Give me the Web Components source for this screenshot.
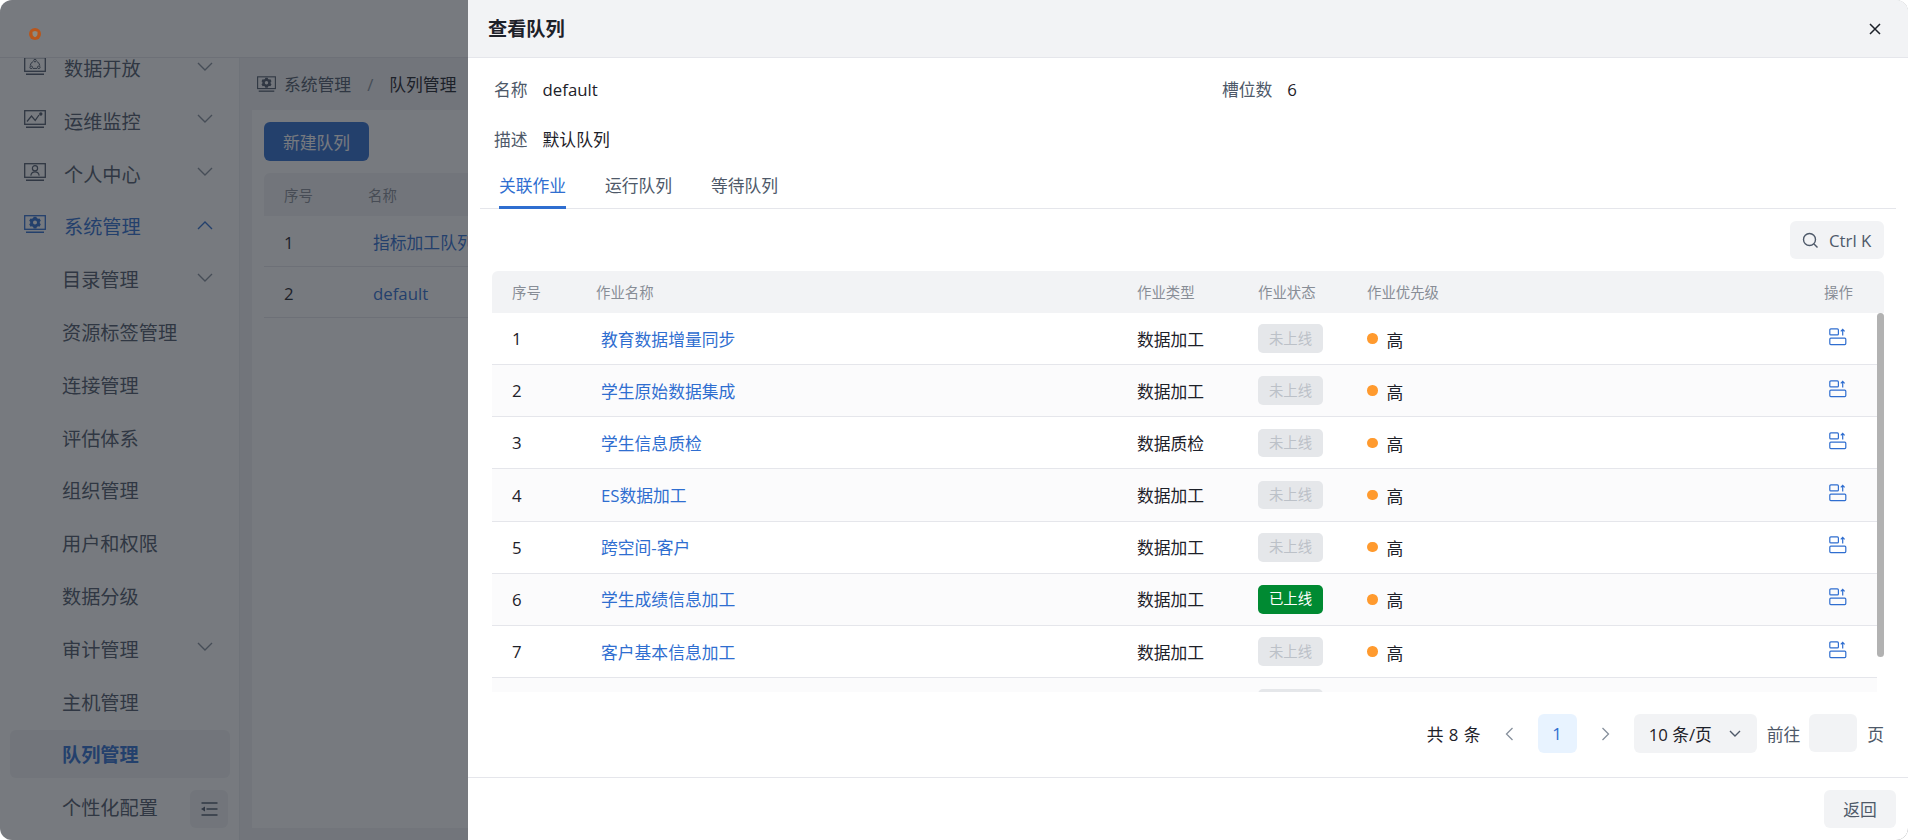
<!DOCTYPE html>
<html lang="zh-CN">
<head>
<meta charset="utf-8">
<title>队列管理</title>
<style>
  html, body { margin: 0; padding: 0; background: #fff; width: 1908px; height: 840px; overflow: hidden; }
  body { font-family: "Open Sans", "Noto Sans CJK SC", sans-serif; color: #1d2129; --blue: #2f6ed0; }
</style>
</head>
<body>
<x-app>
  <x-topbar slot="top"></x-topbar>
  <x-sidebar slot="side">
    <x-nav-item icon="open" chevron="down">数据开放</x-nav-item>
    <x-nav-item icon="monitor" chevron="down">运维监控</x-nav-item>
    <x-nav-item icon="person" chevron="down">个人中心</x-nav-item>
    <x-nav-item icon="gear" chevron="up" open>系统管理</x-nav-item>
    <x-nav-item sub chevron="down">目录管理</x-nav-item>
    <x-nav-item sub>资源标签管理</x-nav-item>
    <x-nav-item sub>连接管理</x-nav-item>
    <x-nav-item sub>评估体系</x-nav-item>
    <x-nav-item sub>组织管理</x-nav-item>
    <x-nav-item sub>用户和权限</x-nav-item>
    <x-nav-item sub>数据分级</x-nav-item>
    <x-nav-item sub chevron="down">审计管理</x-nav-item>
    <x-nav-item sub>主机管理</x-nav-item>
    <x-nav-item sub active>队列管理</x-nav-item>
    <x-nav-item sub>个性化配置</x-nav-item>
  </x-sidebar>
  <x-queue-page slot="main"></x-queue-page>
  <x-drawer slot="drawer" heading="查看队列">
    <x-info-grid></x-info-grid>
    <x-tabs></x-tabs>
    <x-job-table></x-job-table>
    <x-pagination></x-pagination>
    <x-button slot="footer">返回</x-button>
  </x-drawer>
</x-app>

<script>
const ICONS = {
  open: '<rect x="0.7" y="0.7" width="20.6" height="13.6" fill="none" stroke="currentColor" stroke-width="1.3"/><path d="M2 17.3h18" stroke="currentColor" stroke-width="1.5"/><circle cx="11" cy="3.6" r="1.3" fill="none" stroke="currentColor"/><circle cx="7.2" cy="10.3" r="1.3" fill="none" stroke="currentColor"/><circle cx="14.8" cy="10.3" r="1.3" fill="none" stroke="currentColor"/><path d="M9 4.6A5 5 0 0 0 6.2 8.6M13 4.6a5 5 0 0 1 2.8 4M9 11.4h4" fill="none" stroke="currentColor"/>',
  monitor: '<rect x="0.7" y="0.7" width="20.6" height="13.6" fill="none" stroke="currentColor" stroke-width="1.3"/><path d="M2 17.3h18" stroke="currentColor" stroke-width="1.5"/><path d="M3 11.5 7.5 6l3.7 4.4L15 5" fill="none" stroke="currentColor" stroke-width="1.2"/><circle cx="16.8" cy="4" r="1.7" fill="currentColor"/>',
  person: '<rect x="0.7" y="0.7" width="20.6" height="13.6" fill="none" stroke="currentColor" stroke-width="1.3"/><path d="M2 17.3h18" stroke="currentColor" stroke-width="1.5"/><circle cx="11" cy="5.2" r="2.6" fill="none" stroke="currentColor" stroke-width="1.2"/><path d="M6.8 12.6c.4-2.6 2-3.8 4.2-3.8s3.800 1.200 4.200 3.800" fill="none" stroke="currentColor" stroke-width="1.2"/>',
  gear: '<rect x="0.7" y="0.7" width="20.6" height="13.6" fill="none" stroke="currentColor" stroke-width="1.3"/><path d="M2 17.3h18" stroke="currentColor" stroke-width="1.5"/><path fill-rule="evenodd" fill="currentColor" d="M9.600 2.600h2.800l.4 1.400 1.300.7 1.400-.4 1.300 2.400-1 1 0 1.500 1 1-1.300 2.400-1.400-.4-1.300.7-.4 1.400H9.600l-.4-1.400-1.300-.7-1.400.4-1.300-2.400 1-1V7.700l-1-1 1.300-2.400 1.400.4 1.300-.7zM11 6.400a2 2 0 1 0 0 4 2 2 0 0 0 0-4z" transform="translate(0 -0.9)"/>'
};

function define(name, css, html, setup) {
  customElements.define(name, class extends HTMLElement {
    constructor() {
      super();
      this.attachShadow({ mode: 'open' });
    }
    connectedCallback() {
      if (this._done) return;
      this._done = true;
      const h = typeof html === 'function' ? html(this) : html;
      this.shadowRoot.innerHTML = `<style>${css}</style>${h}`;
      if (setup) setup(this);
    }
  });
}

define('x-app', `
  :host { display: block; position: relative; width: 1908px; height: 840px; overflow: hidden; border-radius: 12px; background: #fff; }
  .frame { display: flex; flex-direction: column; height: 100%; }
  .body { flex: 1; min-height: 0; display: flex; }
  .mask { position: absolute; inset: 0; background: rgba(29,33,41,.6); z-index: 1; }
`, `
  <div class="frame">
    <slot name="top"></slot>
    <div class="body"><slot name="side"></slot><slot name="main"></slot></div>
  </div>
  <div class="mask"></div>
  <slot name="drawer"></slot>
`);

define('x-topbar', `
  :host { display: flex; align-items: center; box-sizing: border-box; height: 58px; background: #fff; border-bottom: 1px solid #e5e6eb; padding: 10px 0 0 29px; flex: none; }
  svg { position: relative; z-index: 2; display: block; }
`, `
  <svg width="12" height="12" viewBox="0 0 12 12">
    <circle cx="6" cy="6" r="6" fill="#b8561c"/>
    <path d="M3.500 3.700 6 3l2.500.7v2.300C8.500 7.700 7.300 8.700 6 9.200 4.700 8.700 3.500 7.700 3.500 6z" fill="#8d8a82"/>
  </svg>
`);

define('x-sidebar', `
  :host { display: block; position: relative; flex: none; width: 240px; box-sizing: border-box; height: 782px; overflow: hidden; background: #fff; border-right: 1px solid #eceef1; }
  .list { display: flex; flex-direction: column; margin-top: -16.4px; }
  .collapse { position: absolute; left: 190px; bottom: 12px; width: 38px; height: 38px; border-radius: 6px; background: #f2f3f5; display: flex; align-items: center; justify-content: center; }
`, `
  <div class="list"><slot></slot></div>
  <div class="collapse">
    <svg width="18" height="14" viewBox="0 0 18 14">
      <path d="M1.500 1h16M6.500 7h11M1.500 13h16" stroke="#4e5969" stroke-width="1.300" fill="none"/>
      <path d="M1 7l4-2.500v5z" fill="#4e5969"/>
    </svg>
  </div>
`);

define('x-nav-item', `
  :host { display: block; height: 52.8px; box-sizing: border-box; padding: 2.4px 9px 2.4px 10px; font-size: 19.2px; color: #4e5969; flex: none; }
  .row { height: 48px; display: flex; align-items: center; border-radius: 6px; }
  .ic { width: 22px; height: 18px; margin-left: 14px; margin-right: 18px; margin-top: -4px; flex: none; }
  .ic svg { display: block; }
  .label { flex: 1; line-height: 22px; white-space: nowrap; margin-top: 2px; }
  :host([sub]) .label { margin-left: 52px; }
  :host([open]) { color: var(--blue); }
  :host([active]) .row { background: #f2f3f5; }
  :host([active]) .label { color: var(--blue); font-weight: 700; }
  .chev { width: 16px; height: 10px; margin-right: 17px; flex: none; display: block; margin-top: -3px; }
`, (el) => `
  <div class="row">
    ${el.hasAttribute('icon') ? `<span class="ic"><svg width="22" height="18" viewBox="0 0 22 18">${ICONS[el.getAttribute('icon')]}</svg></span>` : ''}
    <span class="label"><slot></slot></span>
    ${el.hasAttribute('chevron') ? `<svg class="chev" viewBox="0 0 16 10"><path d="${el.getAttribute('chevron') === 'up' ? 'M1 9l7-7 7 7' : 'M1 1l7 7 7-7'}" fill="none" stroke="${el.getAttribute('chevron') === 'up' ? 'currentColor' : '#86909c'}" stroke-width="1.400"/></svg>` : ''}
  </div>
`);

define('x-queue-page', `
  :host { display: block; flex: 1; min-width: 0; background: #f2f3f5; padding: 0 0 12px 12px; box-sizing: border-box; height: 782px; font-size: 16.8px; }
  .crumb { height: 52px; display: flex; align-items: center; color: #4e5969; margin-left: 5px; }
  .crumb svg { width: 19px; height: 16px; margin-right: 8px; flex: none; }
  .crumb .sep { margin: 0 16px; color: #86909c; }
  .crumb .cur { color: #1d2129; }
  .card { background: #fff; height: 718px; box-sizing: border-box; padding: 12px; }
  .btn { width: 105px; height: 39px; border-radius: 6px; background: var(--blue); color: #fff; display: flex; align-items: center; justify-content: center; }
  .head, .r { display: grid; grid-template-columns: 84px 1fr; align-items: center; }
  .head { margin-top: 12px; height: 43px; background: #f2f3f5; border-radius: 6px 6px 0 0; color: #888d96; font-size: 14.4px; }
  .head span, .r span { padding-left: 20px; }
  .r { height: 51px; box-sizing: border-box; border-bottom: 1px solid #e5e6eb; padding-top: 2px; }
  .r a { color: var(--blue); text-decoration: none; padding-left: 25px; white-space: nowrap; }
`, `
  <div class="crumb">
    <svg viewBox="0 0 22 18">${ICONS.gear}</svg>
    <span>系统管理</span><span class="sep">/</span><span class="cur">队列管理</span>
  </div>
  <div class="card">
    <div class="btn">新建队列</div>
    <div class="head"><span>序号</span><span>名称</span></div>
    <div class="r"><span>1</span><a>指标加工队列</a></div>
    <div class="r"><span>2</span><a>default</a></div>
  </div>
`);

define('x-drawer', `
  :host { display: flex; flex-direction: column; position: absolute; top: 0; left: 468px; width: 1440px; height: 840px; background: #fff; z-index: 3; }
  header { flex: none; box-sizing: border-box; height: 58px; background: #f2f3f5; border-bottom: 1px solid #e5e6eb; display: flex; align-items: center; justify-content: space-between; padding: 0 27px 0 20px; }
  h2 { margin: 0; font-size: 19.2px; line-height: 28px; font-weight: 700; color: #1d2129; }
  main { flex: 1; min-height: 0; padding: 0 12px; }
  footer { flex: none; box-sizing: border-box; height: 63px; border-top: 1px solid #e5e6eb; display: flex; justify-content: flex-end; align-items: flex-start; padding: 12px 12px 0; }
  svg { display: block; }
`, (el) => `
  <header>
    <h2>${el.getAttribute('heading')}</h2>
    <svg width="12" height="12" viewBox="0 0 12 12"><path d="M1 1l10 10M11 1 1 11" stroke="#1d2129" stroke-width="1.500" fill="none"/></svg>
  </header>
  <main><slot></slot></main>
  <footer><slot name="footer"></slot></footer>
`);

define('x-info-grid', `
  :host { display: grid; grid-template-columns: 728px 1fr; grid-auto-rows: 50px; padding: 7px 0 0 14px; font-size: 16.8px; }
  .f { display: flex; align-items: center; gap: 15px; line-height: 24px; }
  .k { color: #4e5969; }
  .v { color: #1d2129; }
`, `
  <div class="f"><span class="k">名称</span><span class="v">default</span></div>
  <div class="f"><span class="k">槽位数</span><span class="v">6</span></div>
  <div class="f"><span class="k">描述</span><span class="v">默认队列</span></div>
`);

define('x-tabs', `
  :host { display: flex; box-sizing: border-box; height: 44px; border-bottom: 1px solid #e5e6eb; padding-left: 19px; gap: 38.800px; font-size: 16.8px; color: #4e5969; }
  .t { position: relative; height: 44px; line-height: 42px; white-space: nowrap; }
  .t.on { color: var(--blue); }
  .t.on::after { content: ""; position: absolute; left: 0; right: 0; bottom: 0; height: 3px; background: var(--blue); }
`, `
  <div class="t on">关联作业</div><div class="t">运行队列</div><div class="t">等待队列</div>
`);

define('x-tag', `
  :host { display: flex; align-items: center; justify-content: center; width: 65px; height: 28.6px; border-radius: 5px; background: #e5e7ea; color: #bcc1c8; font-size: 14.4px; line-height: 20px; }
  :host([on]) { background: #008a32; color: #fff; }
`, `<slot></slot>`);

define('x-op-icon', `
  :host { display: block; width: 18px; height: 18px; margin: -4px 0 0 25px; }
  svg { display: block; }
`, `
  <svg width="18" height="18" viewBox="0 0 18 18" fill="none" stroke="#2f6ed0" stroke-width="1.200">
    <rect x="0.800" y="0.900" width="8.600" height="6" rx="1"/>
    <rect x="0.800" y="10.200" width="16" height="6.400" rx="1"/>
    <path d="M13.700 7.500V1.500M11.800 3.300l1.900-2 1.900 2"/>
  </svg>
`);

const JOBS = [
  ['教育数据增量同步', '数据加工', 0],
  ['学生原始数据集成', '数据加工', 0],
  ['学生信息质检', '数据质检', 0],
  ['ES数据加工', '数据加工', 0],
  ['跨空间-客户', '数据加工', 0],
  ['学生成绩信息加工', '数据加工', 1],
  ['客户基本信息加工', '数据加工', 0]
];

define('x-job-table', `
  :host { display: block; padding: 12px 12px 0; }
  .tools { display: flex; justify-content: flex-end; margin-bottom: 12px; }
  .search { box-sizing: border-box; width: 94px; height: 38px; border-radius: 6px; background: #f2f3f5; color: #4e5969; display: flex; align-items: center; padding-left: 12px; gap: 10px; font-size: 16.8px; white-space: nowrap; }
  .head, .row { display: grid; grid-template-columns: 84px 541px 121px 109px 457px 1fr; align-items: center; }
  .head { height: 42px; background: #f2f3f5; border-radius: 6px 6px 0 0; font-size: 14.4px; color: #888d96; padding-bottom: 2px; box-sizing: border-box; }
  .cell { padding-left: 20px; white-space: nowrap; }
  .view { position: relative; height: 379px; overflow: hidden; }
  .rows { width: 1385px; }
  .row { height: 52.170px; box-sizing: border-box; border-bottom: 1px solid #e5e6eb; font-size: 16.8px; color: #1d2129; }
  .row:nth-child(even) { background: #fbfbfc; }
  .link { color: var(--blue); padding-left: 25px; white-space: nowrap; }
  .pri { display: flex; align-items: center; }
  .dot { width: 10.500px; height: 10.500px; border-radius: 50%; background: #ff9a2e; margin-right: 9px; }
  .hi { position: relative; top: 1px; }
  .thumb { position: absolute; right: 0; top: 0; width: 7px; height: 344px; border-radius: 4px; background: #b2b2b2; }
`, () => {
  const row = (j, i) => `
    <div class="row">
      <div class="cell">${i + 1}</div>
      <div class="link">${j[0]}</div>
      <div class="cell">${j[1]}</div>
      <div class="cell"><x-tag ${j[2] ? 'on' : ''}>${j[2] ? '已上线' : '未上线'}</x-tag></div>
      <div class="cell pri"><span class="dot"></span><span class="hi">高</span></div>
      <x-op-icon></x-op-icon>
    </div>`;
  return `
    <div class="tools">
      <div class="search">
        <svg width="17" height="17" viewBox="0 0 17 17" fill="none" stroke="#4e5969" stroke-width="1.400"><circle cx="7.500" cy="7.500" r="6"/><path d="M12 12l3.500 3.500"/></svg>
        <span>Ctrl K</span>
      </div>
    </div>
    <div class="head">
      <div class="cell">序号</div><div class="cell">作业名称</div><div class="cell">作业类型</div><div class="cell">作业状态</div><div class="cell">作业优先级</div><div class="cell">操作</div>
    </div>
    <div class="view">
      <div class="rows">
        ${JOBS.map(row).join('')}
        <div class="row"><div></div><div></div><div></div><div class="cell"><x-tag></x-tag></div></div>
      </div>
      <div class="thumb"></div>
    </div>`;
});

define('x-pagination', `
  :host { display: flex; justify-content: flex-end; align-items: center; height: 39px; margin-top: 22px; padding-right: 12px; font-size: 16.8px; color: #1d2129; white-space: nowrap; }
  .arrow { width: 39px; height: 39px; display: flex; align-items: center; justify-content: center; }
  .page { width: 39px; height: 39px; margin: 0 9px; border-radius: 6px; background: #e8f3ff; color: var(--blue); display: flex; align-items: center; justify-content: center; }
  .sel { box-sizing: border-box; width: 123px; height: 39px; margin-left: 9px; border-radius: 6px; background: #f2f3f5; display: flex; align-items: center; justify-content: space-between; padding: 0 16px 0 15px; }
  .lbl { color: #4e5969; }
  .inp { width: 48px; height: 38px; border-radius: 6px; background: #f2f3f5; margin: 0 10px 1px 9px; }
  .total { margin-right: 9px; word-spacing: 1px; }
  .jump { margin-left: 10px; }
`, `
  <span class="total">共 8 条</span>
  <span class="arrow"><svg width="9" height="14" viewBox="0 0 9 14"><path d="M7.500 1 1.500 7l6 6" fill="none" stroke="#86909c" stroke-width="1.300"/></svg></span>
  <span class="page">1</span>
  <span class="arrow"><svg width="9" height="14" viewBox="0 0 9 14"><path d="M1.500 1l6 6-6 6" fill="none" stroke="#86909c" stroke-width="1.300"/></svg></span>
  <span class="sel"><span>10 条/页</span><svg width="12" height="8" viewBox="0 0 12 8"><path d="M1 1l5 5 5-5" fill="none" stroke="#4e5969" stroke-width="1.400"/></svg></span>
  <span class="lbl jump">前往</span>
  <span class="inp"></span>
  <span class="lbl">页</span>
`);

define('x-button', `
  :host { display: flex; align-items: center; justify-content: center; width: 72px; height: 38px; border-radius: 6px; background: #f2f3f5; color: #4e5969; font-size: 16.8px; }
`, `<slot></slot>`);
</script>
</body>
</html>
